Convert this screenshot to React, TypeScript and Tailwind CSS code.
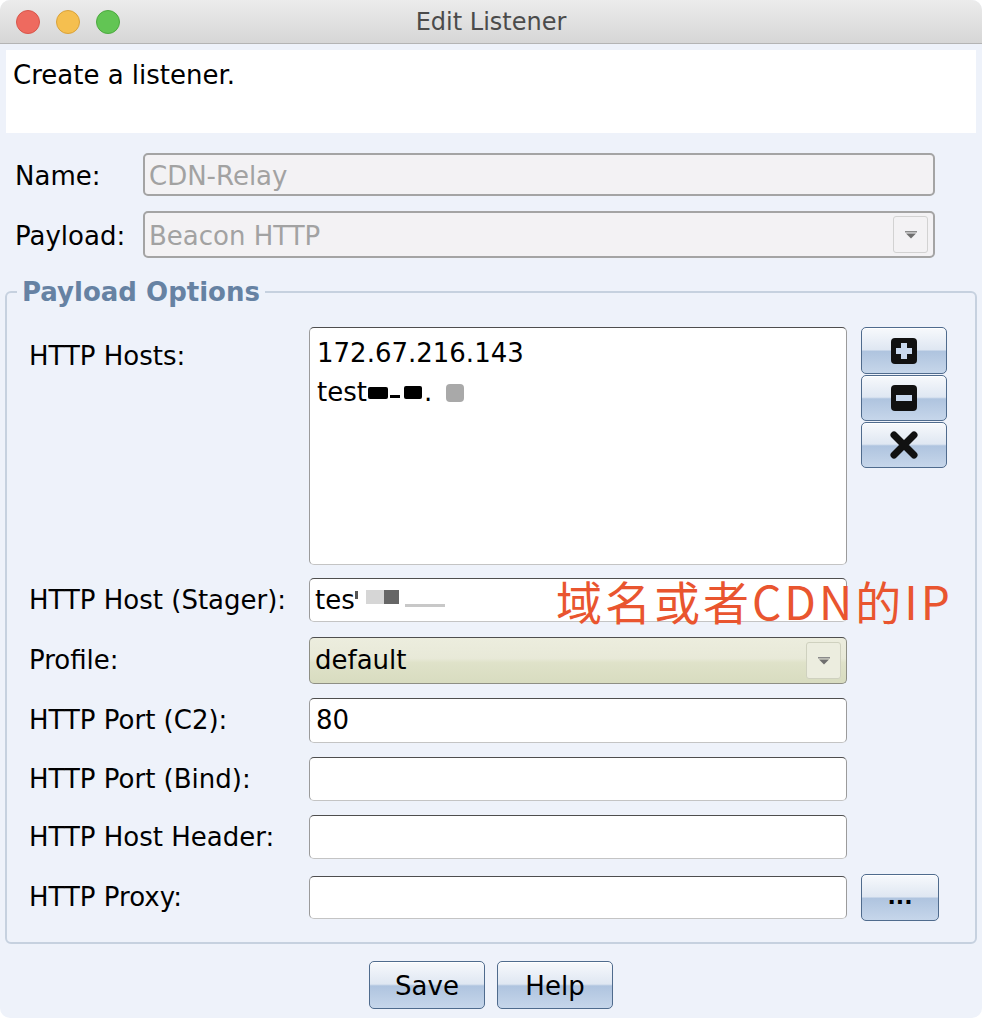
import React from "react";

const font = "font-['DejaVu_Sans',sans-serif]";
const aqua =
  "rounded-[5px] border border-[#4f6b8d] bg-[linear-gradient(to_bottom,#f7f9fc_0%,#dfe7f2_48%,#afc4df_52%,#c6d6ea_100%)] shadow-[inset_0_1px_0_#ffffff]";
const field =
  "w-[538px] rounded-[5px] border border-[#9b9b9b] border-t-[#4e4e4e] border-b-[#c4c4c4] bg-white";

const Arrow: React.FC = () => (
  <svg width="12" height="8" viewBox="0 0 12 8">
    <rect x="0" y="0" width="12" height="1.5" fill="#8a8a8a" />
    <path d="M1 2.5 H11 L6 7.5 Z" fill="#6f6f6f" />
  </svg>
);

const PlusIcon: React.FC = () => (
  <svg width="28" height="28" viewBox="0 0 28 28">
    <rect x="1" y="1" width="26" height="26" rx="4" fill="#111" />
    <rect x="11" y="6" width="6" height="16" fill="#c9d9ee" />
    <rect x="6" y="11" width="16" height="6" fill="#c9d9ee" />
  </svg>
);

const MinusIcon: React.FC = () => (
  <svg width="28" height="28" viewBox="0 0 28 28">
    <rect x="1" y="1" width="26" height="26" rx="4" fill="#111" />
    <rect x="6" y="11" width="16" height="6" fill="#c9d9ee" />
  </svg>
);

const XIcon: React.FC = () => (
  <svg width="30" height="28" viewBox="0 0 30 28">
    <path d="M5 4 L25 24 M25 4 L5 24" stroke="#111" strokeWidth="7" strokeLinecap="round" />
  </svg>
);

const Row: React.FC<{ label: string; mt: string; h: string; children: React.ReactNode }> = ({
  label,
  mt,
  h,
  children,
}) => (
  <div className={`flex items-center ${mt} ${h}`}>
    <div className="w-[280px] text-[26px] text-black">{label}</div>
    {children}
  </div>
);

const App: React.FC = () => {
  return (
    <div className={`w-[982px] h-[1018px] bg-white ${font}`}>
      <div className="w-full h-full rounded-[10px] bg-[#eef2fa] overflow-hidden flex flex-col">
        {/* title bar */}
        <div className="relative h-[44px] flex items-center justify-center bg-[linear-gradient(to_bottom,#ececec,#d6d6d6)] border-b border-[#b4b4b4]">
          <div className="absolute left-[16px] top-[10px] flex gap-[16px]">
            <span className="w-[24px] h-[24px] rounded-full bg-[#ee6a5f] border border-[#d8564b]" />
            <span className="w-[24px] h-[24px] rounded-full bg-[#f5bf4f] border border-[#d9a23a]" />
            <span className="w-[24px] h-[24px] rounded-full bg-[#62c554] border border-[#4ca93f]" />
          </div>
          <span className="text-[24px] text-[#4b4b4b]">Edit Listener</span>
        </div>

        {/* description */}
        <div className="mx-[6px] mt-[6px] h-[83px] bg-white px-[7px] pt-[8px] text-[26px] text-black leading-[34px]">
          Create a listener.
        </div>

        {/* name / payload */}
        <div className="mt-[20px] flex items-center h-[43px] px-[15px]">
          <div className="w-[128px] text-[26px] pt-[3px]">Name:</div>
          <div className="w-[792px] h-[43px] rounded-[5px] border-2 border-[#a4a4a4] bg-[#f3f2f4] flex items-center px-[4px] pt-[3px] text-[26px] text-[#a2a2a2]">
            CDN-Relay
          </div>
        </div>
        <div className="mt-[15px] flex items-center h-[47px] px-[15px]">
          <div className="w-[128px] text-[26px] pt-[3px]">Payload:</div>
          <div className="w-[792px] h-[47px] rounded-[5px] border-2 border-[#a4a4a4] bg-[#f3f2f4] flex items-center justify-between pl-[4px] pr-[5px] text-[26px] text-[#a2a2a2]">
            <span className="pt-[3px]">Beacon HTTP</span>
            <span className="w-[35px] h-[37px] rounded-[3px] border border-[#d2d2d2] flex items-center justify-center">
              <Arrow />
            </span>
          </div>
        </div>

        {/* payload options */}
        <fieldset className="relative mx-[5px] mt-[19px] h-[667px] rounded-[6px] border-2 border-[#c6d1df] px-[22px]">
          <legend className="ml-[-12px] px-[5px] text-[26px] leading-[30px] font-bold text-[#6682a3]">
            Payload Options
          </legend>

          <div className="mt-[20px] flex items-start">
            <div className="w-[280px] pt-[10px] text-[26px]">HTTP Hosts:</div>
            <div className={`${field} h-[238px] px-[7px] pt-[6px] text-[26px] leading-[39px] text-black`}>
              <div>172.67.216.143</div>
              <div className="flex items-center">
                <span>test</span>
                <span className="inline-block w-[20px] h-[12px] bg-black rounded-[2px] ml-[1px]" />
                <span className="inline-block w-[10px] h-[3px] bg-black mt-[8px] ml-[2px]" />
                <span className="inline-block w-[18px] h-[13px] bg-black ml-[4px] rounded-[2px]" />
                <span className="ml-[2px]">.</span>
                <span className="inline-block w-[18px] h-[18px] bg-[#a9a9a9] rounded-[4px] ml-[14px]" />
              </div>
            </div>
            <div className="ml-[14px] flex flex-col gap-[1px]">
              <button className={`${aqua} w-[86px] h-[47px] flex items-center justify-center`}>
                <PlusIcon />
              </button>
              <button className={`${aqua} w-[86px] h-[46px] flex items-center justify-center`}>
                <MinusIcon />
              </button>
              <button className={`${aqua} w-[86px] h-[46px] flex items-center justify-center`}>
                <XIcon />
              </button>
            </div>
          </div>

          <Row label="HTTP Host (Stager):" mt="mt-[13px]" h="h-[44px]">
            <div className={`${field} h-[44px] flex items-center px-[5px] text-[26px]`}>
              <span>tes</span>
              <span className="inline-block w-[3px] h-[8px] bg-[#555] mb-[10px]" />
              <span className="inline-block w-[18px] h-[14px] bg-[#d6d6d6] ml-[8px] mb-[6px]" />
              <span className="inline-block w-[15px] h-[14px] bg-[#666] mb-[6px]" />
              <span className="inline-block w-[40px] h-[3px] bg-[#c8c8c8] ml-[6px] mt-[10px]" />
            </div>
          </Row>

          <Row label="Profile:" mt="mt-[15px]" h="h-[47px]">
            <div className="w-[538px] h-[47px] rounded-[5px] border border-[#8e8f84] border-t-[#4e4e4e] bg-[linear-gradient(to_bottom,#ecedde_0%,#e8e9d8_45%,#dfe2c9_55%,#d8dcc0_100%)] flex items-center justify-between pl-[5px] pr-[5px] text-[26px]">
              <span>default</span>
              <span className="w-[35px] h-[37px] rounded-[3px] border border-[#cfd1bf] bg-[#eceddf] flex items-center justify-center">
                <Arrow />
              </span>
            </div>
          </Row>

          <Row label="HTTP Port (C2):" mt="mt-[14px]" h="h-[45px]">
            <div className={`${field} h-[45px] flex items-center px-[6px] text-[26px]`}>80</div>
          </Row>

          <Row label="HTTP Port (Bind):" mt="mt-[14px]" h="h-[44px]">
            <div className={`${field} h-[44px]`} />
          </Row>

          <Row label="HTTP Host Header:" mt="mt-[14px]" h="h-[44px]">
            <div className={`${field} h-[44px]`} />
          </Row>

          <Row label="HTTP Proxy:" mt="mt-[15px]" h="h-[47px]">
            <div className={`${field} h-[43px]`} />
            <button className={`${aqua} ml-[14px] w-[78px] h-[47px] flex items-center justify-center text-[22px] font-bold leading-none pb-[2px]`}>
              ...
            </button>
          </Row>

          <span className="absolute left-[549px] top-[270px] text-[46px] tracking-[3px] leading-none text-[#e9552f] font-['Noto_Sans_CJK_SC',sans-serif]">
            域名或者CDN的IP
          </span>
        </fieldset>

        {/* bottom buttons */}
        <div className="mt-[17px] flex justify-center gap-[12px]">
          <button className={`${aqua} w-[116px] h-[48px] pt-[2px] text-[26px] text-black`}>Save</button>
          <button className={`${aqua} w-[116px] h-[48px] pt-[2px] text-[26px] text-black`}>Help</button>
        </div>
      </div>
    </div>
  );
};

export default App;
